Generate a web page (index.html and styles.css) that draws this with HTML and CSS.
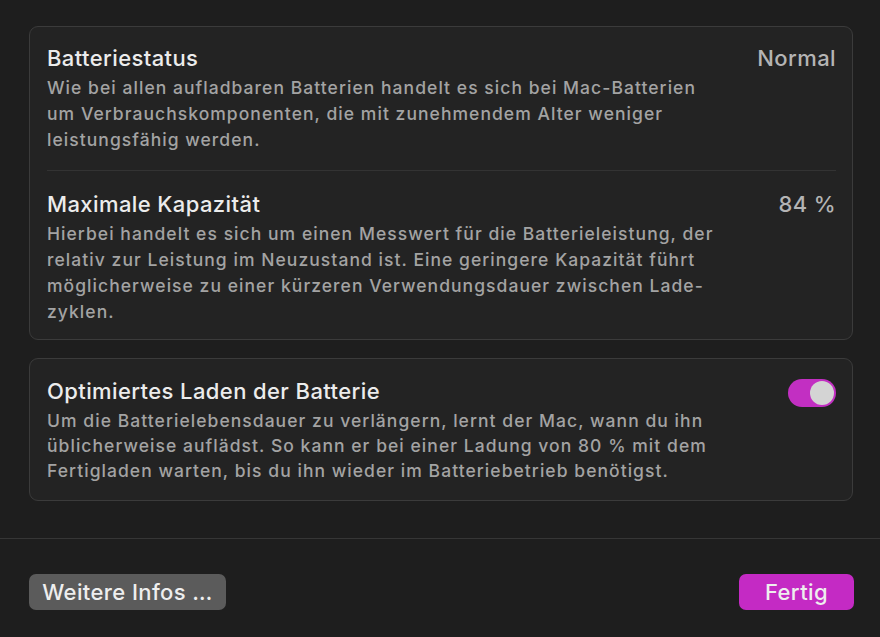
FILE: index.html
```html
<!DOCTYPE html>
<html lang="de">
<head>
<meta charset="utf-8">
<link rel="stylesheet" href="styles.css">
</head>
<body>
<div class="window">
  <div class="content">
    <section class="card">
      <div class="row">
        <div class="text">
          <div class="title">Batteriestatus</div>
          <p class="desc">Wie bei allen aufladbaren Batterien handelt es sich bei Mac-Batterien<br>um Verbrauchskomponenten, die mit zunehmendem Alter weniger<br>leistungsfähig werden.</p>
        </div>
        <div class="value">Normal</div>
      </div>
      <div class="sep"></div>
      <div class="row">
        <div class="text">
          <div class="title">Maximale Kapazität</div>
          <p class="desc">Hierbei handelt es sich um einen Messwert für die Batterieleistung, der<br>relativ zur Leistung im Neuzustand ist. Eine geringere Kapazität führt<br>möglicherweise zu einer kürzeren Verwendungsdauer zwischen Lade-<br>zyklen.</p>
        </div>
        <div class="value">84 %</div>
      </div>
    </section>
    <section class="card card2">
      <div class="row">
        <div class="text">
          <div class="title">Optimiertes Laden der Batterie</div>
          <p class="desc">Um die Batterielebensdauer zu verlängern, lernt der Mac, wann du ihn<br>üblicherweise auflädst. So kann er bei einer Ladung von 80 % mit dem<br>Fertigladen warten, bis du ihn wieder im Batteriebetrieb benötigst.</p>
        </div>
        <div class="toggle"><span class="knob"></span></div>
      </div>
    </section>
  </div>
  <div class="footer">
    <button class="btn btn-secondary">Weitere Infos …</button>
    <button class="btn btn-primary">Fertig</button>
  </div>
</div>
</body>
</html>
```
FILE: styles.css
```css
html, body {
  margin: 0;
  padding: 0;
  background: #1e1e1e;
}
body {
  font-family: Inter, "Noto Sans", sans-serif;
  color: #e6e6e6;
  width: 880px;
  height: 637px;
  overflow: hidden;
}
.window {
  display: flex;
  flex-direction: column;
  height: 637px;
}
.content {
  padding: 26px 27px 0 29px;
  display: flex;
  flex-direction: column;
  gap: 18px;
}
.card {
  background: #232323;
  border: 1px solid #3b3b3b;
  border-radius: 9px;
  padding: 18px 16px 14px 17px;
}
.card2 {
  padding-top: 19px;
  padding-bottom: 17px;
}
.row {
  display: flex;
  justify-content: space-between;
  align-items: flex-start;
}
.text {
  width: 720px;
  white-space: nowrap;
}
.title {
  font-size: 22px;
  line-height: 26px;
  font-weight: 500;
  letter-spacing: 0.4px;
  color: #ececec;
  margin-bottom: 4px;
}
.desc {
  margin: 0;
  font-size: 17.5px;
  line-height: 26px;
  font-weight: 500;
  letter-spacing: 1.05px;
  color: #a3a3a3;
}
.card2 .desc {
  line-height: 25px;
}
.value {
  font-size: 22px;
  line-height: 26px;
  font-weight: 500;
  letter-spacing: 0.4px;
  color: #b4b4b4;
}
.sep {
  height: 1px;
  background: #333333;
  margin: 17px 0 20px 0;
}
.toggle {
  width: 48px;
  height: 28px;
  border-radius: 14px;
  background: #c22fc2;
  position: relative;
  margin-top: 1px;
  flex: none;
}
.knob {
  position: absolute;
  right: 2px;
  top: 2px;
  width: 24px;
  height: 24px;
  border-radius: 50%;
  background: #d4d4d4;
}
.footer {
  margin-top: 37px;
  border-top: 1px solid #363636;
  display: flex;
  justify-content: space-between;
  padding: 35px 26px 0 29px;
}
.btn {
  font-family: Inter, "Noto Sans", sans-serif;
  font-size: 22px;
  font-weight: 500;
  letter-spacing: 0.4px;
  height: 36px;
  border: none;
  border-radius: 7px;
  color: #eeeeee;
  padding: 0;
}
.btn-secondary {
  background: #5b5b5b;
  width: 197px;
}
.btn-primary {
  background: #c42ac4;
  width: 115px;
}
```
